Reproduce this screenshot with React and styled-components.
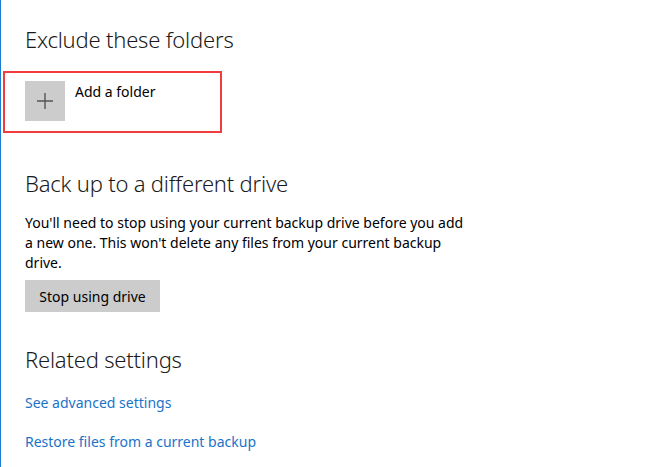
import React from 'react';
import styled, { createGlobalStyle } from 'styled-components';

const GlobalStyle = createGlobalStyle`
  html, body {
    margin: 0;
    padding: 0;
    background: #ffffff;
  }
  body {
    font-family: "Noto Sans", "Open Sans", sans-serif;
    color: #000000;
  }
`;

const Page = styled.div`
  min-height: 467px;
  box-sizing: border-box;
  border-left: 1px solid #1a7fd4;
  padding: 24px 0 0 24px;
`;

const Heading = styled.h2`
  margin: 0;
  font-family: "Noto Sans", sans-serif;
  font-weight: 300;
  font-size: 22px;
  line-height: 30px;
  color: #1a1a1a;
  letter-spacing: -0.2px;
`;

const Section = styled.section`
  margin-bottom: ${(p) => p.gap || 0}px;
`;

const Highlight = styled.div`
  display: flex;
  align-items: flex-start;
  gap: 10px;
  margin: 17px 0 0 -22px;
  padding: 8px 0 0 20px;
  width: 219px;
  height: 62px;
  box-sizing: border-box;
  border: 2px solid #f03c3c;
`;

const AddTile = styled.div`
  width: 40px;
  height: 40px;
  background: #cccccc;
  display: flex;
  align-items: center;
  justify-content: center;
`;

const AddLabel = styled.span`
  font-size: 14px;
  line-height: 20px;
  margin-top: 1px;
`;

const Paragraph = styled.p`
  margin: 15px 0 0;
  width: 445px;
  font-size: 14px;
  line-height: 20px;
`;

const Button = styled.button`
  margin-top: 7px;
  border: none;
  background: #cccccc;
  font-family: "Noto Sans", sans-serif;
  font-size: 14px;
  color: #000000;
  height: 32px;
  width: 135px;
  padding: 0;
`;

const Link = styled.a`
  display: block;
  color: #1a73c9;
  font-size: 14px;
  line-height: 20px;
  text-decoration: none;
  margin-top: ${(p) => p.top}px;
`;

export default function App() {
  return (
    <>
      <GlobalStyle />
      <Page>
        <Section gap={35}>
          <Heading>Exclude these folders</Heading>
          <Highlight>
            <AddTile>
              <svg width="16" height="16" viewBox="0 0 16 16">
                <path d="M8 0V16M0 8H16" stroke="#555555" strokeWidth="1.4" fill="none" />
              </svg>
            </AddTile>
            <AddLabel>Add a folder</AddLabel>
          </Highlight>
        </Section>
        <Section gap={32}>
          <Heading>Back up to a different drive</Heading>
          <Paragraph>
            You'll need to stop using your current backup drive before you add a new one. This won't delete any files from your current backup drive.
          </Paragraph>
          <Button>Stop using drive</Button>
        </Section>
        <Section>
          <Heading>Related settings</Heading>
          <Link top={19}>See advanced settings</Link>
          <Link top={19}>Restore files from a current backup</Link>
        </Section>
      </Page>
    </>
  );
}
